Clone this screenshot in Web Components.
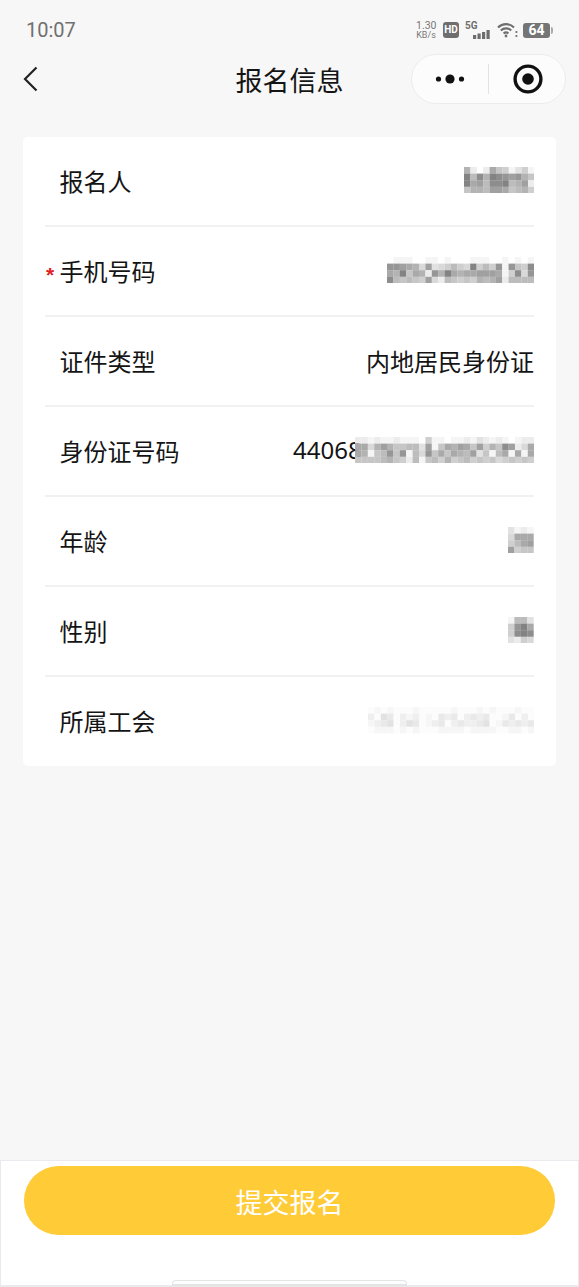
<!DOCTYPE html>
<html lang="zh"><head><meta charset="utf-8">
<style>
html,body{margin:0;padding:0;background:#f7f7f7;}
body{font-family:"Noto Sans CJK SC","Noto Sans",sans-serif;width:579px;height:1287px;overflow:hidden;}
form-row span.id{position:relative;display:block;width:241px;height:34px;font:24px/34px "Noto Sans","Noto Sans CJK SC",sans-serif;}
</style></head><body>
<app-page>
  <status-bar slot="top"></status-bar>
  <nav-bar slot="top" title="报名信息"></nav-bar>
  <form-card slot="main">
    <form-row label="报名人"><pixel-mosaic></pixel-mosaic></form-row>
    <form-row label="手机号码" required><pixel-mosaic></pixel-mosaic></form-row>
    <form-row label="证件类型">内地居民身份证</form-row>
    <form-row label="身份证号码"><span class="id">44068<pixel-mosaic class="over"></pixel-mosaic></span></form-row>
    <form-row label="年龄"><pixel-mosaic></pixel-mosaic></form-row>
    <form-row label="性别"><pixel-mosaic></pixel-mosaic></form-row>
    <form-row label="所属工会" last><pixel-mosaic></pixel-mosaic></form-row>
  </form-card>
  <submit-bar slot="bottom" text="提交报名"></submit-bar>
</app-page>
<script>
function def(name, css, html){
  customElements.define(name, class extends HTMLElement{
    connectedCallback(){
      if(this.shadowRoot) return;
      const r=this.attachShadow({mode:'open'});
      r.innerHTML='<style>'+css+'</style>'+(typeof html==='function'?html(this):html);
    }
  });
}
def('app-page',
 ':host{display:flex;flex-direction:column;height:1287px;background:#f7f7f7}.main{flex:1;padding:0 23px}',
 '<slot name="top"></slot><div class="main"><slot name="main"></slot></div><slot name="bottom"></slot>');

def('status-bar',
 `:host{display:flex;align-items:center;justify-content:space-between;height:54px;padding:6px 26px 0 26px;box-sizing:border-box}
  .t{font:20px/24px Roboto,sans-serif;color:#707070}
  .r{display:flex;align-items:center}
  .sp{font:400 9px/8.5px Roboto,sans-serif;text-align:center;width:20px;margin-right:7px;color:#777;white-space:nowrap}
  .sp b{display:block;font-weight:400;font-size:10.5px;line-height:9.5px}
  svg{display:block}
  .hd{width:16px;height:16px;border-radius:3px;background:#6e6e6e;color:#fff;font:700 10px/16px Roboto,sans-serif;text-align:center;margin-right:6px}
  .g{position:relative;width:25px;height:18px;margin-right:7px}
  .g i{position:absolute;left:0;top:0;font:700 10px/10px Roboto,sans-serif;color:#6e6e6e;font-style:normal}
  .g svg{position:absolute;left:8px;bottom:0}
  .bat{position:relative;width:27px;height:15px;background:#757575;border-radius:3px;color:#fff;font:700 14px/15px Roboto,sans-serif;text-align:center;margin-left:5px;margin-right:3px}
  .bat:after{content:"";position:absolute;right:-3px;top:4px;width:2px;height:7px;background:#aaa;border-radius:0 2px 2px 0}`,
 `<div class="t">10:07</div>
  <div class="r">
   <div class="sp"><b>1.30</b>KB/s</div>
   <div class="hd">HD</div>
   <div class="g"><i>5G</i><svg width="17" height="9" viewBox="0 0 17 9" fill="#6e6e6e"><rect x="0" y="5" width="3.2" height="4"/><rect x="4.5" y="3.5" width="3.2" height="5.5"/><rect x="9" y="2" width="3.2" height="7"/><rect x="13.5" y="0" width="3.2" height="9"/></svg></div>
   <svg width="21" height="16" viewBox="0 0 21 16" fill="none" stroke="#6e6e6e" stroke-width="2.1"><path d="M1 5.5C5.5 1 12.5 1 17 5.5"/><path d="M3.8 8.5C6.8 5.6 11.2 5.6 14.2 8.5"/><path d="M6.6 11.4C8 10.1 10 10.1 11.4 11.4"/><circle cx="9" cy="14" r="1.4" fill="#6e6e6e" stroke="none"/><circle cx="19.4" cy="10" r="1.1" fill="#6e6e6e" stroke="none"/><circle cx="19.4" cy="14" r="1.1" fill="#6e6e6e" stroke="none"/></svg>
   <div class="bat">64</div>
  </div>`);

def('nav-bar',
 `:host{display:flex;align-items:center;justify-content:space-between;height:50px;padding:0 13px 0 23px;position:relative}
  .title{position:absolute;left:0;right:0;top:0;text-align:center;font-size:27px;line-height:52px;color:#141414}
  .cap{position:relative;width:155px;height:50px;box-sizing:border-box;border:1px solid #ececec;border-radius:25px;background:#fcfcfc;display:flex;align-items:center}
  .a{width:76px;display:flex;justify-content:center;padding-right:1px;box-sizing:border-box}
  .d{width:1px;height:30px;background:#e3e3e3}
  .b{flex:1;display:flex;justify-content:center;padding-left:2px}
  svg{display:block}`,
 el=>`<svg width="16" height="26" viewBox="0 0 16 26" fill="none" stroke="#222" stroke-width="2.2"><path d="M13.5 1.5 2 13l11.5 11.5"/></svg>
  <div class="title">${el.getAttribute('title')}</div>
  <div class="cap"><div class="a"><svg width="30" height="10" viewBox="0 0 30 10" fill="#111"><circle cx="3.5" cy="5" r="2.6"/><circle cx="15" cy="5" r="4.6"/><circle cx="26.5" cy="5" r="2.6"/></svg></div><div class="d"></div><div class="b"><svg width="30" height="30" viewBox="0 0 30 30"><circle cx="15" cy="15" r="12.9" fill="none" stroke="#111" stroke-width="3.4"/><circle cx="15" cy="15" r="5.8" fill="#111"/></svg></div></div>`);

def('form-card',
 ':host{display:block;margin-top:33px;background:#fff;border-radius:5px;padding:0 22px}',
 '<slot></slot>');

def('form-row',
 `:host{display:flex;align-items:center;justify-content:space-between;height:90px;box-sizing:border-box;border-bottom:2px solid #f1f1f1;padding:0 0 2px 14.5px;position:relative;font-size:24px;color:#141414;white-space:nowrap}
  :host([last]){border-bottom:none;height:89px}
  .req{position:absolute;left:1px;top:37px;color:#e02020;font:700 21px/21px "Liberation Sans",sans-serif}
  .v{display:flex;align-items:center;justify-content:flex-end}`,
 el=>`${el.hasAttribute('required')?'<span class="req">*</span>':''}<span>${el.getAttribute('label')}</span><span class="v"><slot></slot></span>`);

const M={
 '报名人':['7dfd69aecae','28372345479','2658332875d','9778556987a'],
 '手机号码':['feeeffeefefffeeeffefefe','44567b5cba8ab2a8a4e49a3','6729 67d4726766555 6ea3b4'.replace(/ /g,''),'38989a5bd89a9a7875d8888'],
 '身份证号码':['ddedeedeeefaeefeedecdedefedd','66b7579988c5e9675695a7935db6','67e98494e8b49696785c9e86e6e6','9999879ad8e98a7a98a9a9ba9a9a'],
 '年龄':['cede','b666','a865','5a99'],
 '性别':['e88c','a426','a323','cdab'],
 '所属工会':['fefefffefffffefffefefffeff','dfbcfdedfefcdcfdcdcffecfdf','edcbfdbcfedcfdcddcbfecdcdc','feeefefefffeeeefeeeeffeefe']
};
def('pixel-mosaic',
 `:host{display:block;position:relative;line-height:0}
  :host(.over){position:absolute;right:0;top:4px}
  svg{display:block;filter:blur(.35px)}`,
 el=>{
   const row=el.parentElement.closest('form-row');
   const rows=M[row.getAttribute('label')];
   const cw=6.4,ch=6.6,light=row.getAttribute('label')==='所属工会';
   let s='';
   rows.forEach((r,y)=>{[...r].forEach((c,x)=>{
     let d=parseInt(c,16);
     let g=Math.round(112+d*9.5);
     if(light) g=Math.round(226+(d-11)*6.5);
     s+=`<rect x="${(x*cw).toFixed(1)}" y="${(y*ch).toFixed(1)}" width="${cw+.1}" height="${ch+.1}" fill="rgb(${g},${g},${g})"/>`;
   })});
   const w=rows[0].length*cw,h=rows.length*ch;
   return `<svg width="${w}" height="${h}" viewBox="0 0 ${w} ${h}">${s}</svg>`;
 });

def('submit-bar',
 `:host{display:block;height:127px;box-sizing:border-box;background:#fff;border:1px solid #e9e9ee;border-width:1px 1px 2px 1px;padding:5px 23px 0;position:relative}
  .b{height:69px;border-radius:35px;background:#ffcb37;color:#fff;font-size:27px;line-height:71px;text-align:center}
  .h{position:absolute;left:171px;bottom:-1px;width:235px;height:6px;box-sizing:border-box;border:1px solid #e4e4e4;border-bottom-width:2px;border-radius:4px 4px 0 0;background:#fff}`,
 el=>`<div class="b">${el.getAttribute('text')}</div><div class="h"></div>`);
</script>
</body></html>
